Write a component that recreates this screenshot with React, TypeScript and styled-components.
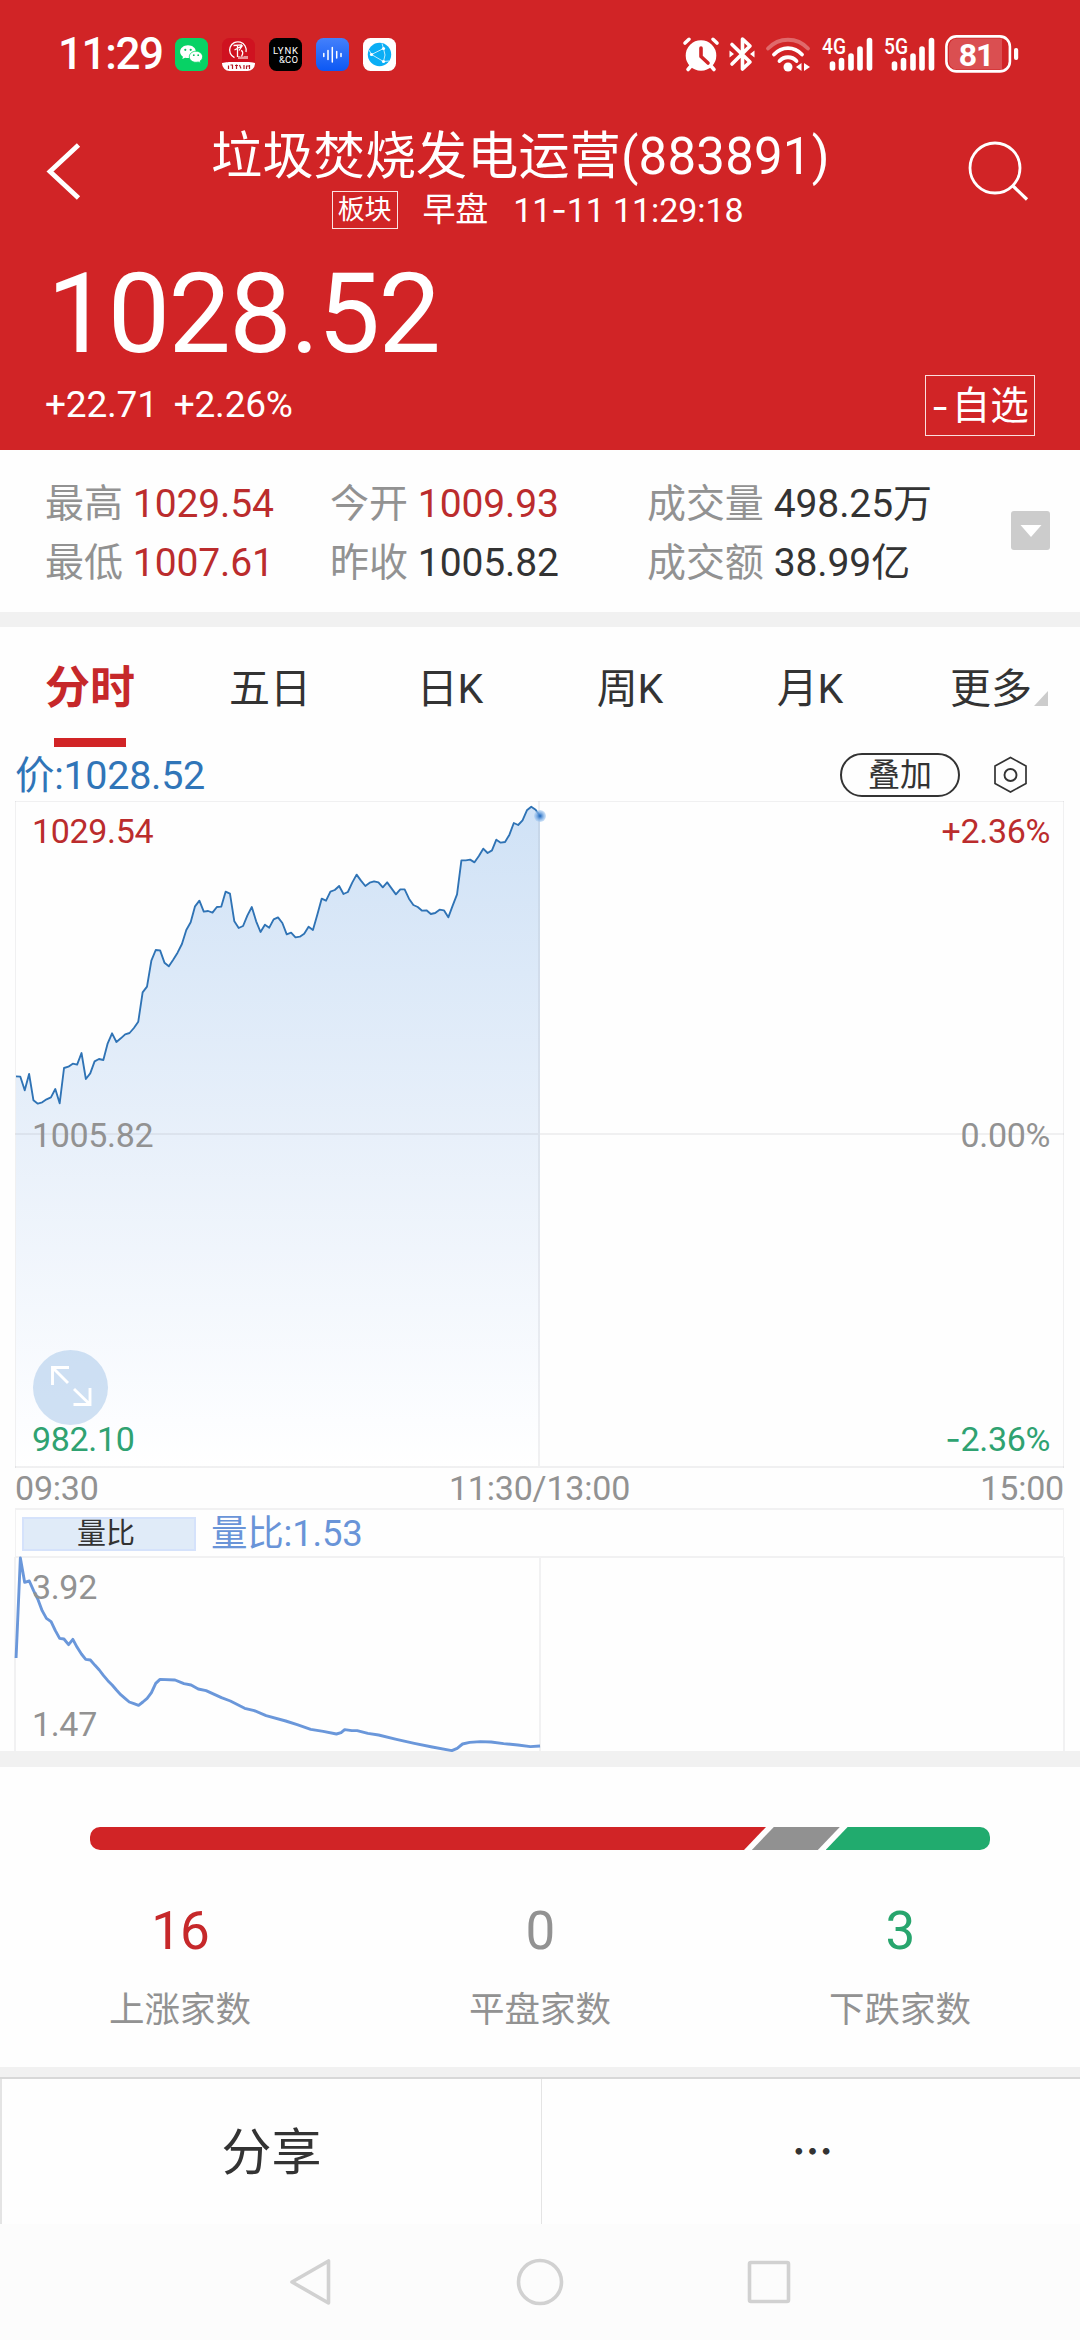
import React from "react";
import styled, { createGlobalStyle } from "styled-components";

const RED = "#d12426";
const TEXT_RED = "#bb2c2d";
const GREEN = "#21ab6e";
const GREY = "#929292";
const INK = "#333333";
const LINE = "#f1f1f2";

const GlobalStyle = createGlobalStyle`
  * { box-sizing: border-box; }
  body {
    margin: 0;
    background: #fff;
    font-family: Roboto, "Noto Sans CJK SC", sans-serif;
    color: ${INK};
  }
  svg { display: block; flex: none; overflow: visible; }
`;

const Screen = styled.div`
  width: 1080px;
  height: 2340px;
  display: flex;
  flex-direction: column;
  background: #fefefe;
  overflow: hidden;
  white-space: nowrap;
`;

const Header = styled.header`
  height: 450px;
  flex: none;
  background: ${RED};
  color: #fff;
  display: flex;
  flex-direction: column;
`;

const StatusBar = styled.div`
  height: 108px;
  display: flex;
  align-items: center;
  justify-content: space-between;
  padding: 0 60px 0 58px;
`;

const StatusGroup = styled.div<{ $gap?: number }>`
  display: flex;
  align-items: center;
  gap: ${(p) => p.$gap ?? 0}px;
`;

const Clock = styled.span`
  width: 117px;
  font-size: 44px;
  line-height: 44px;
  font-weight: 500;
  letter-spacing: -1.4px;
`;

const TitleBar = styled.div`
  height: 136px;
  display: flex;
  justify-content: space-between;
  padding: 0 52px 0 46px;
`;

const TitleIcon = styled.div`
  width: 60px;
  padding-top: 31px;
`;

const TitleText = styled.div`
  display: flex;
  flex-direction: column;
  align-items: center;
  margin-left: -33px;
`;

const StockName = styled.h1`
  margin: 18px 0 0;
  font-size: 51px;
  line-height: 62px;
  font-weight: 400;
  letter-spacing: 0.2px;
`;

const SubLine = styled.div`
  display: flex;
  align-items: center;
  height: 38px;
  margin-top: 3px;
  margin-left: 34px;
  font-size: 33px;
  letter-spacing: -0.2px;
`;

const BoardTag = styled.span`
  width: 66px;
  height: 38px;
  margin-right: 25px;
  border: 1px solid #fbe3e3;
  font-size: 27px;
  line-height: 37px;
  text-align: center;
`;

const Session = styled.span`
  margin-right: 25px;
  line-height: 36px;
`;

const DateTime = styled.span`
  font-size: 34px;
  line-height: 36px;
  letter-spacing: -0.1px;
`;

const Hyphen = styled.span`
  font-family: Inter, sans-serif;
`;

const Quote = styled.div`
  flex: 1;
  display: flex;
  justify-content: space-between;
  padding: 0 45px 0 45px;
`;

const Price = styled.div`
  margin: 10px 0 0 2px;
  font-size: 111px;
  line-height: 120px;
  letter-spacing: -1.6px;
`;

const Change = styled.div`
  display: flex;
  gap: 16px;
  margin-top: 9px;
  font-size: 37px;
  line-height: 44px;
  letter-spacing: -0.2px;
`;

const WatchButton = styled.button`
  width: 110px;
  height: 61px;
  margin: 131px 0 0;
  padding: 0;
  border: 1px solid #fbdede;
  background: none;
  color: #fff;
  font: inherit;
  font-size: 38.5px;
  line-height: 58px;
  display: flex;
  align-items: center;
  justify-content: center;
  gap: 3px;
`;

const Stats = styled.section`
  height: 162px;
  flex: none;
  display: flex;
  align-items: center;
  padding: 0 30px 0 45px;
`;

const StatColumn = styled.div<{ $width: number }>`
  width: ${(p) => p.$width}px;
  display: flex;
  flex-direction: column;
  margin-top: 5px;
`;

const Stat = styled.div<{ $color: string }>`
  display: flex;
  gap: 10px;
  height: 59px;
  line-height: 59px;
  font-size: 39px;
  letter-spacing: -0.1px;
  color: ${(p) => p.$color};
`;

const StatLabel = styled.span`
  color: ${GREY};
`;

const ExpandStats = styled.div`
  width: 39px;
  height: 39px;
  margin: -1px 0 0 auto;
  border-radius: 3px;
  background: #ccc;
  display: flex;
  align-items: center;
  justify-content: center;
`;

const Band = styled.div<{ $height: number }>`
  height: ${(p) => p.$height}px;
  flex: none;
  background: #f1f1f1;
`;

const Tabs = styled.nav`
  height: 120px;
  flex: none;
  display: grid;
  grid-template-columns: repeat(6, 180px);
`;

const Tab = styled.div<{ $active?: boolean }>`
  display: flex;
  flex-direction: column;
  align-items: center;
  justify-content: space-between;
  padding-top: 31px;
  font-size: ${(p) => (p.$active ? 45 : 41)}px;
  line-height: 62px;
  font-weight: ${(p) => (p.$active ? 700 : 400)};
  color: ${(p) => (p.$active ? "#c6282a" : INK)};
`;

const TabMark = styled.span`
  width: 72px;
  height: 9px;
  background: ${RED};
`;

const MoreLabel = styled.span`
  display: flex;
  align-items: flex-end;
  gap: 2px;
  padding-left: 18px;
  svg { margin-bottom: 14px; }
`;

const PriceRow = styled.div`
  height: 54px;
  flex: none;
  display: flex;
  align-items: center;
  padding: 0 50px 0 15px;
`;

const PriceNow = styled.span`
  flex: 1;
  font-size: 39.5px;
  line-height: 52px;
  letter-spacing: -0.3px;
  margin-top: 3px;
  color: #3075b8;
`;

const OverlayButton = styled.span`
  width: 120px;
  height: 44px;
  margin: 1px 32px 0 0;
  border: 2px solid ${INK};
  border-radius: 22px;
  font-size: 32px;
  line-height: 41px;
  text-align: center;
`;

const ChartBox = styled.div<{ $height: number }>`
  position: relative;
  width: 1049px;
  height: ${(p) => p.$height}px;
  flex: none;
  margin-left: 15px;
`;

const Scale = styled.div<{ $pad: string }>`
  position: absolute;
  inset: 0;
  display: flex;
  flex-direction: column;
  justify-content: space-between;
  padding: ${(p) => p.$pad};
  font-size: 34px;
  line-height: 40px;
  letter-spacing: -0.35px;
`;

const ScaleRow = styled.div<{ $color: string }>`
  display: flex;
  justify-content: space-between;
  color: ${(p) => p.$color};
`;

const FullscreenIcon = styled.div`
  position: absolute;
  left: 18px;
  top: 549px;
`;

const TimeAxis = styled.div`
  height: 41px;
  flex: none;
  display: grid;
  grid-template-columns: 1fr auto 1fr;
  padding: 2px 16px 0 15px;
  font-size: 34px;
  line-height: 38px;
  letter-spacing: -0.2px;
  color: ${GREY};
  span:last-child { text-align: right; }
`;

const IndicatorHead = styled.div`
  width: 1049px;
  height: 49px;
  flex: none;
  margin-left: 15px;
  display: flex;
  align-items: center;
  gap: 15px;
  padding-left: 6px;
  border: 1px solid ${LINE};
  border-top-width: 2px;
  border-bottom: 0;
`;

const IndicatorTab = styled.span`
  width: 174px;
  height: 34px;
  padding-right: 6px;
  border: 2px solid #d5e2fb;
  background: #e0ebf8;
  font-size: 29px;
  line-height: 31px;
  text-align: center;
`;

const IndicatorValue = styled.span`
  font-size: 36.5px;
  line-height: 44px;
  letter-spacing: -0.2px;
  color: #6994d8;
`;

const Breadth = styled.section`
  height: 300px;
  flex: none;
  padding-top: 60px;
`;

const BreadthBar = styled.div`
  display: flex;
  height: 23px;
  margin: 0 90px;
`;

const Segment = styled.span<{ $kind: "up" | "flat" | "down" }>`
  height: 23px;
  width: ${(p) => ({ up: 676, flat: 88, down: 164.5 })[p.$kind]}px;
  flex: none;
  margin-left: ${(p) => (p.$kind === "up" ? 0 : -14.2)}px;
  background: ${(p) => ({ up: RED, flat: "#919191", down: GREEN })[p.$kind]};
  border-radius: ${(p) => ({ up: "10px 0 0 10px", flat: "0", down: "0 10px 10px 0" })[p.$kind]};
  clip-path: ${(p) =>
    ({
      up: "polygon(0 0, 100% 0, calc(100% - 22px) 100%, 0 100%)",
      flat: "polygon(22px 0, 100% 0, calc(100% - 22px) 100%, 0 100%)",
      down: "polygon(22px 0, 100% 0, 100% 100%, 0 100%)",
    })[p.$kind]};
`;

const Counts = styled.div`
  display: grid;
  grid-template-columns: repeat(3, 360px);
  margin-top: 49px;
`;

const Count = styled.div<{ $color: string }>`
  display: flex;
  flex-direction: column;
  align-items: center;
  font-size: 53px;
  line-height: 64px;
  letter-spacing: -1px;
  color: ${(p) => p.$color};
`;

const CountLabel = styled.span`
  margin-top: 22px;
  font-size: 35.5px;
  line-height: 50px;
  letter-spacing: 0;
  color: ${GREY};
`;

const Actions = styled.div`
  height: 147px;
  flex: none;
  border-top: 2px solid #d8d8d8;
  display: grid;
  grid-template-columns: 541px 1fr;
`;

const Action = styled.div<{ $edge: number; $cjk?: boolean }>`
  display: flex;
  align-items: center;
  justify-content: center;
  padding: ${(p) => (p.$cjk ? "0 0 6px 3px" : "0 0 8px")};
  border-left: ${(p) => p.$edge}px solid #e4e4e4;
  font-family: ${(p) => (p.$cjk ? '"Noto Sans CJK SC", sans-serif' : "inherit")};
  font-size: ${(p) => (p.$cjk ? 41 : 50)}px;
  font-weight: ${(p) => (p.$cjk ? 700 : 400)};
`;

const SystemNav = styled.footer`
  height: 116px;
  flex: none;
  display: flex;
  justify-content: center;
  align-items: center;
  gap: 181px;
  background: #fcfcfc;
`;

const priceY = [
  889, 890, 931, 882, 961, 971, 967, 958, 952, 927, 970, 864, 860, 851, 854, 819, 897, 880, 844, 837, 840, 790, 760, 786,
  775, 763, 759, 744, 725, 637, 620, 542, 510, 511, 548, 559, 539, 518, 492, 450, 427, 379, 362, 395, 393, 398, 381, 380,
  335, 341, 424, 444, 438, 406, 381, 424, 456, 434, 443, 418, 412, 429, 463, 458, 472, 470, 461, 440, 450, 404, 356, 362,
  335, 330, 318, 342, 336, 308, 284, 302, 318, 308, 304, 307, 322, 307, 325, 343, 328, 328, 356, 375, 381, 392, 391, 402,
  399, 389, 391, 412, 377, 343, 241, 241, 239, 247, 228, 206, 219, 211, 179, 188, 186, 164, 129, 135, 121, 91, 80, 89, 108,
];
const MINUTE = 13.1;
const pricePoints = priceY.map((y, i) => `${(48 + i * MINUTE).toFixed(1)},${y}`).join(" ");

const ratioPoints =
  "45,1074 57,774 69,847 82,843 94,872 106,898 118,932 130,955 143,965 155,992 167,1015 179,1017 192,1034 204,1018 " +
  "216,1042 228,1062 240,1078 253,1080 266,1096 278,1110 290,1127 302,1142 314,1155 326,1170 338,1184 350,1195 362,1206 " +
  "375,1211 388,1216 400,1206 412,1195 424,1178 436,1150 448,1138 490,1140 515,1151 535,1155 555,1167 577,1172 620,1193 " +
  "645,1203 685,1225 712,1232 745,1247 800,1263 832,1274 870,1288 905,1294 942,1302 955,1298 965,1289 985,1292 1000,1292 " +
  "1030,1300 1060,1305 1110,1318 1160,1330 1210,1341 1265,1352 1280,1345 1295,1332 1315,1327 1345,1325 1375,1326 " +
  "1410,1331 1450,1335 1485,1340 1512,1338";

const PriceChart = () => (
  <svg width="1049" height="667" viewBox="45 63 3147 2001">
    <defs>
      <linearGradient id="area" gradientUnits="userSpaceOnUse" x1="0" y1="80" x2="0" y2="2062">
        <stop offset="0" stopColor="#d0e2f6" />
        <stop offset="0.5" stopColor="#e8f0fa" />
        <stop offset="0.93" stopColor="#fcfdff" />
        <stop offset="1" stopColor="#ffffff" />
      </linearGradient>
      <radialGradient id="dot">
        <stop offset="0.1" stopColor="#2f74c4" />
        <stop offset="0.55" stopColor="#6fa4e0" stopOpacity="0.8" />
        <stop offset="1" stopColor="#a8ccf2" stopOpacity="0.55" />
      </radialGradient>
    </defs>
    <polygon points={`48,2060 ${pricePoints} 1620,2060`} fill="url(#area)" />
    <g fill="none" stroke="#5a6068" strokeOpacity="0.085">
      <path d="M46.5 63V2064M3190.5 63V2064M45 64.5H3192" strokeWidth="3" />
      <path d="M45 1062H3192M45 2061H3192M1617 63V2064" strokeWidth="6" />
    </g>
    <polyline points={pricePoints} fill="none" stroke="#2f73b5" strokeWidth="5.6" strokeLinejoin="round" />
    <circle cx="1620" cy="108" r="18" fill="url(#dot)" />
  </svg>
);

const RatioChart = () => (
  <svg width="1049" height="194" viewBox="42 771 2937 582" preserveAspectRatio="none">
    <g stroke={LINE} strokeWidth="2" fill="none">
      <path d="M42 771H2979" vectorEffect="non-scaling-stroke" />
      <path d="M1512 771V1353" vectorEffect="non-scaling-stroke" />
      <path d="M42 771V1353M2979 771V1353" vectorEffect="non-scaling-stroke" />
    </g>
    <polyline points={ratioPoints} fill="none" stroke="#6a97da" strokeWidth="2.9" strokeLinejoin="round" vectorEffect="non-scaling-stroke" />
  </svg>
);

const WeChatIcon = () => (
  <svg width="33" height="33" viewBox="0 0 33 33">
    <rect width="33" height="33" rx="7.5" fill="#07d265" />
    <path d="M13 7.2c-4.4 0-7.9 2.9-7.9 6.5 0 2 1.1 3.8 2.9 5l-.7 2.4 2.8-1.4c.9.3 1.9.4 2.9.4 4.4 0 7.9-2.8 7.9-6.4S17.4 7.2 13 7.2z" fill="#fff" />
    <path d="M21 13.2c-3.700 0-6.700 2.500-6.700 5.600s3 5.500 6.700 5.500c.8 0 1.600-.1 2.300-.3l2.300 1.200-.6-2c1.600-1 2.600-2.600 2.600-4.400 0-3.100-3-5.600-6.600-5.600z" fill="#fff" stroke="#07d265" strokeWidth="0.8" />
    <g fill="#07c160">
      <circle cx="10.3" cy="11.8" r="1.1" /><circle cx="15.7" cy="11.8" r="1.1" />
      <circle cx="18.8" cy="17.2" r="0.9" /><circle cx="23.2" cy="17.2" r="0.9" />
    </g>
  </svg>
);

const BankIcon = () => (
  <svg width="33" height="33" viewBox="0 0 33 33">
    <rect width="33" height="33" rx="7.5" fill="#cf1220" />
    <path d="M0 25C4 24 8 24 9 24H24C28 24 30 24 33 25V26A7.5 7.5 0 0 1 25.5 33H7.5A7.5 7.5 0 0 1 0 25.5z" fill="#fff" />
    <g fill="none" stroke="#fff" strokeWidth="1.3">
      <path d="M12.5 19.7A8.3 8.3 0 1 1 24 14" />
      <path d="M11.5 7.5L20 6.8M12.5 12L20.5 7.5 17 12.5M15.5 8V19M19 12.5C21.5 13 21 16 19.5 18.5" />
      <path d="M17 18V21M19 18.5V21M21 18.5V21M23 18V21M25 18V21" strokeWidth="1.1" />
    </g>
    <g stroke="#b51b26" strokeWidth="1.2" fill="none">
      <path d="M6.5 27.5V31M8.5 27H11M10.5 27V31M13 27.5H16M14.5 26.5V31M17.5 27L19 30.5M22 27V31M24 28H28M24.5 31V28M27.5 31V27" />
    </g>
  </svg>
);

const LynkIcon = () => (
  <svg width="33" height="33" viewBox="0 0 33 33">
    <rect width="33" height="33" rx="7.5" fill="#000" />
    <g fill="#fff" fontFamily="Roboto, sans-serif" fontSize="9.5">
      <text x="4" y="16" textLength="25">LYNK</text>
      <text x="10" y="24.5" textLength="19">&amp;CO</text>
    </g>
  </svg>
);

const VoiceIcon = () => (
  <svg width="33" height="33" viewBox="0 0 33 33">
    <defs>
      <linearGradient id="voice" x1="0" y1="0" x2="0" y2="1">
        <stop offset="0" stopColor="#4480fb" />
        <stop offset="1" stopColor="#0c58f4" />
      </linearGradient>
    </defs>
    <rect width="33" height="33" rx="7.5" fill="url(#voice)" />
    <g stroke="#fff" strokeWidth="1.5" strokeLinecap="round">
      <path d="M7.8 15.5V18.500M12 12.5V21.5M16.3 9.5V24M20.7 13.5V20M25 15.5V18.5" />
    </g>
  </svg>
);

const BrowserIcon = () => (
  <svg width="33" height="33" viewBox="0 0 33 33">
    <rect width="33" height="33" rx="7.5" fill="#fff" />
    <circle cx="16.5" cy="16.5" r="11.7" fill="#0aaef5" />
    <g fill="none" stroke="#bfeaff" strokeWidth="1">
      <path d="M8.5 16.5L20.5 10.5M8.5 16.5L20.5 23.5M20.5 10.5Q23.5 17 20.5 23.5M8.5 16.5L6 12M20.5 10.5L19 5.5M20.5 23.5L26 23" />
    </g>
    <g fill="#fff">
      <circle cx="8.5" cy="16.5" r="1.6" /><circle cx="20.5" cy="10.5" r="1.6" /><circle cx="20.5" cy="23.5" r="1.6" />
    </g>
  </svg>
);

const AlarmIcon = () => (
  <svg width="36" height="36" viewBox="0 0 36 36">
    <circle cx="18" cy="19.5" r="15.3" fill="#fff" />
    <g stroke="#fff" strokeWidth="3.6" strokeLinecap="round">
      <path d="M2 7L6 3.3M34 7L30 3.3M8 30L5 33.5M28 30L31 33.5" />
    </g>
    <path d="M18 12V20.5L25 27" fill="none" stroke={RED} strokeWidth="3.6" strokeLinecap="round" strokeLinejoin="round" />
  </svg>
);

const BluetoothIcon = () => (
  <svg width="26" height="36" viewBox="0 0 26 36">
    <path d="M3 8.5L21 26 13.5 33V3L21 10 3 28" fill="none" stroke="#fff" strokeWidth="3.6" strokeLinejoin="round" strokeLinecap="round" />
    <path d="M0.5 14.5L5 18 0.5 21.5zM25.5 14.5L21 18 25.5 21.5z" fill="#fff" />
  </svg>
);

const WifiIcon = () => (
  <svg width="46" height="36" viewBox="0 0 46 36">
    <g fill="none" stroke="#fff" strokeWidth="3.8" strokeLinecap="round">
      <path d="M3 12.5C14 0.8 32 0.8 43 12.5" opacity="0.32" />
      <path d="M9 18.5C17 10 29 10 37 18.5" />
      <path d="M14.5 25C19 20 27 20 31.5 25" />
    </g>
    <circle cx="23" cy="31" r="4.5" fill="#fff" />
    <path d="M36.5 27V35L31 31zM39 27V35L45 31z" fill="#fff" />
  </svg>
);

const SignalIcon = ({ label }: { label: string }) => (
  <svg width="52" height="36" viewBox="0 0 52 36">
    <text x="1" y="17.5" fill="#fff" fontFamily="Roboto, sans-serif" fontWeight="500" fontSize="22" textLength="24" lengthAdjust="spacingAndGlyphs">
      {label}
    </text>
    <g stroke="#fff" strokeWidth="5.6" strokeLinecap="round">
      <path d="M11.5 28V32M20.5 24.5V32M30 20V32M39 13V32M48.5 4.5V32" />
    </g>
  </svg>
);

const BatteryIcon = () => (
  <svg width="75" height="38" viewBox="0 0 75 38">
    <rect x="1.4" y="1.4" width="63.5" height="35" rx="10" fill="none" stroke="#fff" strokeWidth="2.6" />
    <path d="M12 3.5H57V34.5H12A8 8 0 0 1 4 26.5V11.5A8 8 0 0 1 12 3.5z" fill="#fff" opacity="0.2" />
    <rect x="69" y="13" width="4.2" height="12" rx="2" fill="#fff" />
    <text x="31" y="30.5" fill="#fff" fontFamily="Roboto, sans-serif" fontWeight="700" fontSize="32" textAnchor="middle" letterSpacing="-1">
      81
    </text>
  </svg>
);

const stats = [
  { width: 285, rows: [["最高", "1029.54", TEXT_RED], ["最低", "1007.61", TEXT_RED]] },
  { width: 317, rows: [["今开", "1009.93", TEXT_RED], ["昨收", "1005.82", INK]] },
  { width: 320, rows: [["成交量", "498.25万", INK], ["成交额", "38.99亿", INK]] },
];

export default function App() {
  return (
    <>
      <GlobalStyle />
      <Screen>
        <Header>
          <StatusBar>
            <StatusGroup>
              <Clock>11:29</Clock>
              <StatusGroup $gap={14}>
                <WeChatIcon />
                <BankIcon />
                <LynkIcon />
                <VoiceIcon />
                <BrowserIcon />
              </StatusGroup>
            </StatusGroup>
            <StatusGroup $gap={10}>
              <AlarmIcon />
              <BluetoothIcon />
              <WifiIcon />
              <SignalIcon label="4G" />
              <SignalIcon label="5G" />
              <BatteryIcon />
            </StatusGroup>
          </StatusBar>
          <TitleBar>
            <TitleIcon>
              <svg width="40" height="64" viewBox="0 0 40 64">
                <path d="M32.5 6L4 32.5 32.5 59" fill="none" stroke="#fff" strokeWidth="4.8" />
              </svg>
            </TitleIcon>
            <TitleText>
              <StockName>垃圾焚烧发电运营(883891)</StockName>
              <SubLine>
                <BoardTag>板块</BoardTag>
                <Session>早盘</Session>
                <DateTime>
                  11<Hyphen>-</Hyphen>11 11:29:18
                </DateTime>
              </SubLine>
            </TitleText>
            <TitleIcon>
              <svg width="62" height="64" viewBox="0 0 62 64">
                <circle cx="27" cy="29" r="25" fill="none" stroke="#fff" strokeWidth="2.8" />
                <path d="M44.5 46.5L59 60.5" stroke="#fff" strokeWidth="3.2" />
              </svg>
            </TitleIcon>
          </TitleBar>
          <Quote>
            <div>
              <Price>1028.52</Price>
              <Change>
                <span>+22.71</span>
                <span>+2.26%</span>
              </Change>
            </div>
            <WatchButton>
              <Hyphen>-</Hyphen>自选
            </WatchButton>
          </Quote>
        </Header>

        <Stats>
          {stats.map((col) => (
            <StatColumn key={col.width} $width={col.width}>
              {col.rows.map(([label, value, color]) => (
                <Stat key={label} $color={color}>
                  <StatLabel>{label}</StatLabel>
                  {value}
                </Stat>
              ))}
            </StatColumn>
          ))}
          <ExpandStats>
            <svg width="22" height="12" viewBox="0 0 22 12">
              <path d="M0.5 0H21.5L11 12z" fill="#fff" />
            </svg>
          </ExpandStats>
        </Stats>
        <Band $height={15} />

        <Tabs>
          <Tab $active>
            分时
            <TabMark />
          </Tab>
          <Tab>五日</Tab>
          <Tab>日K</Tab>
          <Tab>周K</Tab>
          <Tab>月K</Tab>
          <Tab>
            <MoreLabel>
              更多
              <svg width="14" height="15" viewBox="0 0 14 15">
                <path d="M14 0V15H0z" fill="#ccc" />
              </svg>
            </MoreLabel>
          </Tab>
        </Tabs>

        <PriceRow>
          <PriceNow>价:1028.52</PriceNow>
          <OverlayButton>叠加</OverlayButton>
          <svg width="38" height="40" viewBox="0 0 38 40">
            <path d="M18.5 3.5L34 12V29.5L18.5 38 3 29.5V12z" fill="none" stroke={INK} strokeWidth="1.7" />
            <circle cx="18.5" cy="21" r="6" fill="none" stroke={INK} strokeWidth="1.9" />
          </svg>
        </PriceRow>

        <ChartBox $height={666}>
          <PriceChart />
          <Scale $pad="10px 14px 8px 17px">
            <ScaleRow $color={TEXT_RED}>
              <span>1029.54</span>
              <span>+2.36%</span>
            </ScaleRow>
            <ScaleRow $color={GREY}>
              <span>1005.82</span>
              <span>0.00%</span>
            </ScaleRow>
            <ScaleRow $color="#2fa271">
              <span>982.10</span>
              <span>
                <Hyphen>-</Hyphen>2.36%
              </span>
            </ScaleRow>
          </Scale>
          <FullscreenIcon>
            <svg width="75" height="75" viewBox="0 0 75 75">
              <circle cx="37.5" cy="37.5" r="37.5" fill="#a9c8e9" fillOpacity="0.55" />
              <path d="M19.5 35V17.5H36M19.5 17.5L35 33M57 38V54.5H40.5M57 54.5L41 39" fill="none" stroke="#fff" strokeWidth="2.9" />
            </svg>
          </FullscreenIcon>
        </ChartBox>

        <TimeAxis>
          <span>09:30</span>
          <span>11:30/13:00</span>
          <span>15:00</span>
        </TimeAxis>

        <IndicatorHead>
          <IndicatorTab>量比</IndicatorTab>
          <IndicatorValue>量比:1.53</IndicatorValue>
        </IndicatorHead>
        <ChartBox $height={194}>
          <RatioChart />
          <Scale $pad="10px 14px 7px 17px">
            <ScaleRow $color={GREY}>3.92</ScaleRow>
            <ScaleRow $color={GREY}>1.47</ScaleRow>
          </Scale>
        </ChartBox>
        <Band $height={16} />

        <Breadth>
          <BreadthBar>
            <Segment $kind="up" />
            <Segment $kind="flat" />
            <Segment $kind="down" />
          </BreadthBar>
          <Counts>
            <Count $color="#c6282a">
              16<CountLabel>上涨家数</CountLabel>
            </Count>
            <Count $color={GREY}>
              0<CountLabel>平盘家数</CountLabel>
            </Count>
            <Count $color="#27a56d">
              3<CountLabel>下跌家数</CountLabel>
            </Count>
          </Counts>
        </Breadth>
        <Band $height={10} />

        <Actions>
          <Action $edge={2}>分享</Action>
          <Action $edge={1} $cjk>
            …
          </Action>
        </Actions>

        <SystemNav>
          <svg width="48" height="50" viewBox="0 0 48 50">
            <path d="M41.5 4V46L5 25z" fill="none" stroke="#d1d1d1" strokeWidth="3.6" strokeLinejoin="round" />
          </svg>
          <svg width="48" height="50" viewBox="0 0 48 50">
            <circle cx="24" cy="25" r="21.5" fill="none" stroke="#d1d1d1" strokeWidth="3.6" />
          </svg>
          <svg width="48" height="50" viewBox="0 0 48 50">
            <rect x="4.5" y="5.5" width="39" height="39" rx="1.5" fill="none" stroke="#d1d1d1" strokeWidth="3.6" />
          </svg>
        </SystemNav>
      </Screen>
    </>
  );
}
